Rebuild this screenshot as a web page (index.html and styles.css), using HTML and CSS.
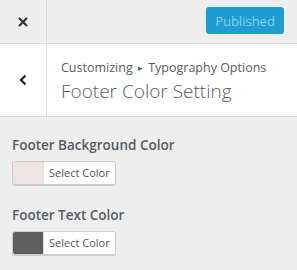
FILE: index.html
```html
<!DOCTYPE html>
<html>
<head>
  <title>Customizer</title>
  <link rel="stylesheet" href="styles.css">
</head>
<body>
  <div class="header">
    <button class="close">
      <svg width="12" height="12" viewBox="0 0 12 12"><path d="M2 2L10 10M10 2L2 10" stroke="#333" stroke-width="2.2"/></svg>
    </button>
    <div class="actions">
      <button class="publish" disabled>Published</button>
    </div>
  </div>
  <div class="section-title">
    <button class="back">
      <svg width="10" height="12" viewBox="0 0 10 12"><path d="M7.5 1.5L3 6L7.5 10.5" fill="none" stroke="#222" stroke-width="2.2"/></svg>
    </button>
    <div class="titles">
      <span class="crumb">Customizing <span class="arrow">&#9656;</span> Typography Options</span>
      <h3>Footer Color Setting</h3>
    </div>
  </div>
  <ul class="controls">
    <li class="control">
      <span class="label">Footer Background Color</span>
      <button class="picker">
        <span class="swatch" style="background: #f0e3e3;"></span>
        <span class="picker-text">Select Color</span>
      </button>
    </li>
    <li class="control">
      <span class="label">Footer Text Color</span>
      <button class="picker">
        <span class="swatch" style="background: #5e5e5e;"></span>
        <span class="picker-text">Select Color</span>
      </button>
    </li>
  </ul>
</body>
</html>
```
FILE: styles.css
```css
body {
  margin: 0;
  background: #eeeeee;
  font-family: "Open Sans", sans-serif;
  color: #555d66;
}
button {
  font-family: inherit;
}
.header {
  display: flex;
  height: 43px;
  border-bottom: 1px solid #dddddd;
  background: #eeeeee;
}
.close {
  width: 47px;
  border: none;
  border-right: 1px solid #dddddd;
  background: transparent;
  padding: 0;
  display: flex;
  align-items: center;
  justify-content: center;
}
.actions {
  flex: 1;
  display: flex;
  justify-content: flex-end;
  align-items: flex-start;
  padding: 7px 13px 0 0;
}
.publish {
  width: 78px;
  height: 27px;
  border: none;
  border-radius: 3px;
  background: #1f9dd2;
  color: #8ccdea;
  font-size: 13px;
  padding: 0;
}
.section-title {
  display: flex;
  background: #ffffff;
  border-bottom: 1px solid #dddddd;
  height: 72px;
}
.back {
  width: 47px;
  border: none;
  border-right: 1px solid #dddddd;
  background: transparent;
  padding: 0;
  display: flex;
  align-items: center;
  justify-content: center;
}
.titles {
  padding: 15px 0 0 14px;
}
.crumb {
  display: block;
  font-size: 12.5px;
  color: #555d66;
  line-height: 18px;
}
.arrow {
  font-size: 9px;
  position: relative;
  top: -1px;
  padding: 0 2px;
}
.titles h3 {
  margin: 0;
  font-size: 19px;
  font-weight: 300;
  color: #555d66;
  line-height: 26px;
}
.controls {
  list-style: none;
  margin: 0;
  padding: 18px 12px 0;
}
.control {
  margin-bottom: 20px;
}
.label {
  display: block;
  font-size: 13.5px;
  font-weight: 600;
  color: #555d66;
  line-height: 20px;
  margin-bottom: 6px;
}
.picker {
  display: flex;
  height: 24px;
  padding: 0;
  border: 1px solid #cccccc;
  border-radius: 3px;
  box-shadow: 0 1px 0 #cccccc;
  background: #f7f7f7;
  overflow: hidden;
}
.swatch {
  width: 30px;
  height: 100%;
}
.picker-text {
  background: #ffffff;
  border-left: 1px solid #dddddd;
  padding: 0 5px;
  font-size: 11px;
  line-height: 22px;
  color: #555555;
}
```
